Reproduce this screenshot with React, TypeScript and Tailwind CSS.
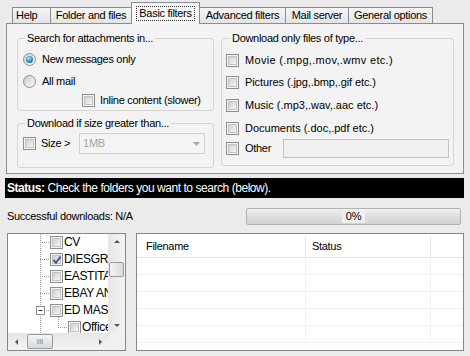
import React from 'react';

function Check({ checked = false }: { checked?: boolean }) {
  return (
    <span className="relative flex h-[13px] w-[13px] shrink-0 items-center justify-center border border-[#8e8f8f] bg-[#f4f4f4]">
      <span className="h-[9px] w-[9px] border border-[#c3c3c3] bg-gradient-to-br from-[#cfcfcf] to-[#f7f7f7]" />
      {checked && (
        <svg className="absolute left-[1px] top-[1px]" width="10" height="10" viewBox="0 0 10 10">
          <path d="M1.5 5 L4 7.8 L8.6 1.6" stroke="#3b5393" strokeWidth="1.9" fill="none" />
        </svg>
      )}
    </span>
  );
}

function Radio({ on = false }: { on?: boolean }) {
  return (
    <span className="flex h-[13px] w-[13px] shrink-0 items-center justify-center rounded-full border border-[#8e8f8f] bg-gradient-to-br from-[#cdcdcd] to-[#fbfbfb]">
      {on && (
        <span className="h-[7px] w-[7px] rounded-full bg-[radial-gradient(circle_at_40%_35%,#a8eaf8,#2a8cb4_55%,#0e4d6b)]" />
      )}
    </span>
  );
}

function Arrow({ dir }: { dir: 'up' | 'down' | 'left' | 'right' }) {
  const d = {
    up: 'M1 5 L4 2 L7 5 Z',
    down: 'M1 3 L4 6 L7 3 Z',
    left: 'M5 1 L2 4 L5 7 Z',
    right: 'M3 1 L6 4 L3 7 Z',
  }[dir];
  return (
    <svg width="8" height="8" viewBox="0 0 8 8">
      <path d={d} fill="#5a5a5a" />
    </svg>
  );
}

function TreeRow({ label, checked, child }: { label: string; checked?: boolean; child?: boolean }) {
  return (
    <div className={`flex h-[17px] items-center ${child ? 'pl-[60px]' : 'pl-[42px]'}`}>
      <Check checked={checked} />
      <span className="ml-[1px] whitespace-nowrap text-[12px]">{label}</span>
    </div>
  );
}

export default function App() {
  return (
    <div className="h-[356px] w-[470px] overflow-hidden bg-[#ebebeb] font-['Liberation_Sans',Arial,sans-serif] text-[11px] leading-[13px] tracking-[-0.3px] text-black">
      {/* Tabs */}
      <div className="flex h-[23px] items-end pl-[12px]">
        <div className="flex h-[16px] w-[39px] items-center border border-b-0 border-[#898c95] bg-gradient-to-b from-[#f5f5f5] to-[#e4e4e4] pl-[3px]">Help</div>
        <div className="-ml-px flex h-[16px] w-[82px] items-center justify-center border border-b-0 border-[#898c95] bg-gradient-to-b from-[#f5f5f5] to-[#e4e4e4]">Folder and files</div>
        <div className="relative z-10 -mb-px -ml-px flex h-[22px] w-[69px] items-center justify-center border border-b-0 border-[#898c95] bg-[#f7f7f7] pb-[1px]">
          <span className="border border-dotted border-[#333] px-[2px]">Basic filters</span>
        </div>
        <div className="-ml-px flex h-[16px] w-[87px] items-center justify-center border border-b-0 border-[#898c95] bg-gradient-to-b from-[#f5f5f5] to-[#e4e4e4]">Advanced filters</div>
        <div className="-ml-px flex h-[16px] w-[64px] items-center justify-center border border-b-0 border-[#898c95] bg-gradient-to-b from-[#f5f5f5] to-[#e4e4e4]">Mail server</div>
        <div className="-ml-px flex h-[16px] w-[85px] items-center justify-center border border-b-0 border-[#898c95] bg-gradient-to-b from-[#f5f5f5] to-[#e4e4e4]">General options</div>
      </div>

      {/* Tab page */}
      <div className="ml-[6px] flex h-[151px] w-[458px] border border-[#898c95] bg-[#f3f3f3] pl-[10px] pt-[14px]">
        {/* Left column */}
        <div className="flex w-[197px] flex-col">
          <div className="h-[73px] rounded-[3px] border border-[#d5d5d5]">
            <span className="-mt-[7px] ml-[7px] block w-fit bg-[#f3f3f3] px-[2px]">Search for attachments in...</span>
            <div className="mt-[6px] flex h-[16px] items-center pl-[5px]">
              <Radio on />
              <span className="ml-[6px]">New messages only</span>
            </div>
            <div className="mt-[6px] flex h-[16px] items-center pl-[5px]">
              <Radio />
              <span className="ml-[6px]">All mail</span>
            </div>
            <div className="mt-[3px] flex h-[16px] items-center pl-[64px]">
              <Check />
              <span className="ml-[5px]">Inline content (slower)</span>
            </div>
          </div>

          <div className="mt-[12px] h-[45px] rounded-[3px] border border-[#d5d5d5]">
            <span className="-mt-[7px] ml-[7px] block w-fit bg-[#f3f3f3] px-[2px]">Download if size greater than...</span>
            <div className="mt-[3px] flex h-[21px] items-center pl-[5px]">
              <Check />
              <span className="ml-[5px]">Size &gt;</span>
              <div className="ml-[9px] flex h-[21px] w-[126px] items-center justify-between border border-[#cfcfcf] bg-[#f4f4f4] pl-[3px] pr-[4px] text-[#a3a3a3]">
                <span>1MB</span>
                <svg width="7" height="4" viewBox="0 0 7 4">
                  <path d="M0 0 L7 0 L3.5 4 Z" fill="#a8a8a8" />
                </svg>
              </div>
            </div>
          </div>
        </div>

        {/* Right column */}
        <div className="ml-[7px] h-[128px] w-[233px] rounded-[3px] border border-[#d5d5d5] pl-[4px]">
          <span className="-mt-[7px] ml-[4px] block w-fit bg-[#f3f3f3] px-[2px]">Download only files of type...</span>
          <div className="mt-[7px] flex h-[16px] items-center">
            <Check />
            <span className="ml-[6px] tracking-[0.3px]">Movie (.mpg,.mov,.wmv etc.)</span>
          </div>
          <div className="mt-[6px] flex h-[16px] items-center">
            <Check />
            <span className="ml-[6px] tracking-[-0.1px]">Pictures (.jpg,.bmp,.gif etc.)</span>
          </div>
          <div className="mt-[7px] flex h-[16px] items-center">
            <Check />
            <span className="ml-[6px] tracking-[0px]">Music (.mp3,.wav,.aac etc.)</span>
          </div>
          <div className="mt-[7px] flex h-[16px] items-center">
            <Check />
            <span className="ml-[6px] tracking-[0px]">Documents (.doc,.pdf etc.)</span>
          </div>
          <div className="mt-[3px] flex h-[19px] items-center">
            <Check />
            <span className="ml-[6px] w-[38px]">Other</span>
            <div className="h-[19px] w-[166px] border border-[#c2c2c2] bg-[#f0f0f0]" />
          </div>
        </div>
      </div>

      {/* Status bar */}
      <div className="ml-[5px] mt-[4px] flex h-[20px] w-[459px] items-center bg-black pl-[2px] text-[12px] tracking-[-0.45px] text-white">
        <span className="font-bold">Status:</span>
        <span className="ml-[3px]">Check the folders you want to search (below).</span>
      </div>

      {/* Downloads + progress */}
      <div className="mt-[10px] flex h-[17px] items-center pl-[7px]">
        <span>Successful downloads: N/A</span>
        <div className="ml-auto mr-[9px] flex h-[17px] w-[215px] items-center justify-center rounded-[2px] border border-[#b2b2b2] bg-gradient-to-b from-[#f2f2f2] via-[#dedede] to-[#d3d3d3]">
          <span className="bg-[#efefef] px-[4px]">0%</span>
        </div>
      </div>

      {/* Bottom: tree + list */}
      <div className="mt-[8px] flex">
        {/* Tree view */}
        <div className="ml-[7px] flex h-[118px] w-[119px] flex-col border border-[#828790] bg-white">
          <div className="flex h-[99px]">
            <div className="relative w-[100px] overflow-hidden">
              <svg className="absolute left-0 top-0" width="100" height="99" viewBox="0 0 100 99">
                <g stroke="#9a9a9a" strokeWidth="1" strokeDasharray="1 1" fill="none">
                  <path d="M32.5 0 V99" />
                  <path d="M32 8.5 H42" />
                  <path d="M32 25.5 H42" />
                  <path d="M32 42.5 H42" />
                  <path d="M32 59.5 H42" />
                  <path d="M36 76.5 H42" />
                  <path d="M50.5 83 V93.5" />
                  <path d="M50 93.5 H60" />
                </g>
                <rect x="28.5" y="72.5" width="8" height="8" fill="#fff" stroke="#8c8c8c" />
                <path d="M30.5 76.5 H34.5" stroke="#333" />
              </svg>
              <div className="relative">
                <TreeRow label="CV" />
                <TreeRow label="DIESGROUP" checked />
                <TreeRow label="EASTITALIA" />
                <TreeRow label="EBAY AND" />
                <TreeRow label="ED MASTER" />
                <TreeRow label="Office" child />
              </div>
            </div>
            {/* vertical scrollbar */}
            <div className="flex w-[17px] flex-col bg-gradient-to-r from-[#e6e6e6] to-[#f4f4f4]">
              <div className="flex h-[16px] items-center justify-center">
                <Arrow dir="up" />
              </div>
              <div className="mx-[1px] mt-[12px] flex h-[15px] items-center justify-center rounded-[2px] border border-[#9a9a9a] bg-gradient-to-r from-[#f5f5f5] to-[#d9d9d9]" />
              <div className="flex-1" />
              <div className="flex h-[16px] items-center justify-center">
                <Arrow dir="down" />
              </div>
            </div>
          </div>
          {/* horizontal scrollbar */}
          <div className="flex h-[17px]">
            <div className="flex w-[100px] items-center bg-gradient-to-b from-[#e6e6e6] to-[#f4f4f4]">
              <div className="flex w-[17px] justify-center">
                <Arrow dir="left" />
              </div>
              <div className="ml-[2px] flex h-[15px] w-[26px] items-center justify-center rounded-[2px] border border-[#9a9a9a] bg-gradient-to-b from-[#f5f5f5] to-[#d9d9d9] text-[8px] leading-none tracking-[0px] text-[#777]">
                III
              </div>
              <div className="flex-1" />
              <div className="flex w-[17px] justify-center">
                <Arrow dir="right" />
              </div>
            </div>
            <div className="w-[17px] bg-[#f0f0f0]" />
          </div>
        </div>

        {/* List view */}
        <div className="ml-[10px] h-[118px] w-[328px] border border-[#828790] bg-white">
          <div className="flex h-[24px] border-b border-[#e5e5e5] pt-[2px]">
            <div className="flex w-[169px] items-center border-r border-[#e5e5e5] pl-[9px]">Filename</div>
            <div className="flex w-[125px] items-center border-r border-[#e5e5e5] pl-[6px]">Status</div>
            <div className="flex-1" />
          </div>
          {[0, 1, 2, 3, 4].map((i) => (
            <div key={i} className="flex h-[17px] border-b border-[#efefef]">
              <div className="w-[169px] border-r border-[#efefef]" />
              <div className="w-[125px] border-r border-[#efefef]" />
              <div className="flex-1" />
            </div>
          ))}
        </div>
      </div>
    </div>
  );
}
